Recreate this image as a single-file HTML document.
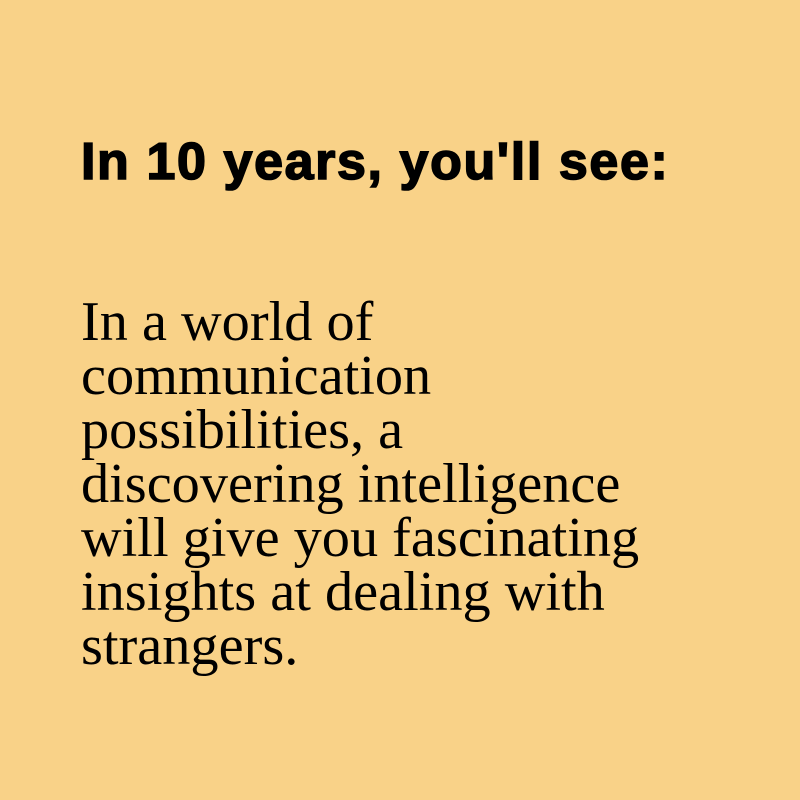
<!DOCTYPE html>
<html><head><style>
html,body{margin:0;padding:0;}
body{width:800px;height:800px;background:#F9D288;position:relative;overflow:hidden;}
h1{position:absolute;left:81px;margin:0;font-family:"Liberation Sans",Arial,sans-serif;font-weight:bold;font-size:52px;line-height:51px;top:137px;color:#000;-webkit-text-stroke:1.6px #000;letter-spacing:1.6px;white-space:nowrap;}
p{position:absolute;left:81px;top:295px;margin:0;font-family:"Liberation Serif","Times New Roman",serif;font-size:56.3px;line-height:54px;color:#000;width:660px;}
</style></head><body>
<h1>In 10 years, you'll see:</h1>
<p>In a world of<br>communication<br>possibilities, a<br>discovering intelligence<br>will give you fascinating<br>insights at dealing with<br>strangers.</p>
</body></html>
